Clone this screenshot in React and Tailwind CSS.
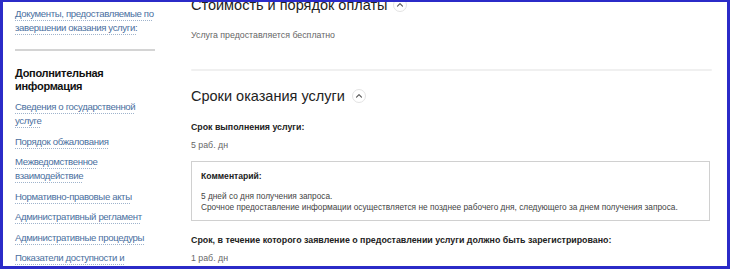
import React from "react";

function Chevron() {
  return (
    <span className="inline-flex items-center justify-center w-[14px] h-[14px] rounded-full border border-[#e3e3e3] bg-white">
      <svg width="8" height="8" viewBox="0 0 8 8" fill="none">
        <path d="M1.5 5.2 L4 2.7 L6.5 5.2" stroke="#555" strokeWidth="1.1" strokeLinecap="round" strokeLinejoin="round" />
      </svg>
    </span>
  );
}

function SideLink({ children }) {
  return (
    <a className="block whitespace-nowrap text-[9.6px] tracking-[-0.35px] leading-[14px] text-[#4a6fa0] underline decoration-dotted decoration-[#9fb3cc] underline-offset-[3px]">
      {children}
    </a>
  );
}

export default function App() {
  return (
    <div
      className="w-[730px] h-[269px] overflow-hidden bg-white border-l-[3px] border-r-[3px] border-t-[2px] border-b-[3px] border-[#2b2bc8] flex"
      style={{ fontFamily: '"Liberation Sans", Arial, sans-serif' }}
    >
      <aside className="w-[152px] shrink-0 pl-[12px] pt-[5px] flex flex-col">
        <SideLink>
          Документы, предоставляемые по
          <br />
          завершении оказания услуги:
        </SideLink>
        <div className="mt-[14px] h-[2px] w-[140px] bg-[#d4d4d4]" />
        <div className="mt-[16px] text-[11px] tracking-[-0.3px] leading-[13px] font-bold text-[#111]">
          Дополнительная
          <br />
          информация
        </div>
        <div className="mt-[7px] flex flex-col gap-[6.5px]">
          <SideLink>
            Сведения о государственной
            <br />
            услуге
          </SideLink>
          <SideLink>Порядок обжалования</SideLink>
          <SideLink>
            Межведомственное
            <br />
            взаимодействие
          </SideLink>
          <SideLink>Нормативно-правовые акты</SideLink>
          <SideLink>Административный регламент</SideLink>
          <SideLink>Административные процедуры</SideLink>
          <SideLink>Показатели доступности и</SideLink>
        </div>
      </aside>
      <main className="ml-[36px] w-[519px] flex flex-col">
        <div className="mt-[-7px] flex items-center gap-[5px] h-[20px]">
          <span className="text-[14.5px] leading-[20px] text-[#222]">Стоимость и порядок оплаты</span>
          <Chevron />
        </div>
        <div className="mt-[14px] text-[8.8px] leading-[12px] text-[#666]">Услуга предоставляется бесплатно</div>
        <div className="mt-[28px] h-[2px] w-[521px] bg-[#f0f0f0] rounded-full" />
        <div className="mt-[15px] flex items-center gap-[7px] h-[20px]">
          <span className="text-[14.5px] leading-[20px] text-[#222]">Сроки оказания услуги</span>
          <Chevron />
        </div>
        <div className="mt-[15px] text-[8.8px] leading-[12px] font-bold text-[#222]">Срок выполнения услуги:</div>
        <div className="mt-[6px] text-[8.8px] leading-[12px] text-[#666]">5 раб. дн</div>
        <div className="mt-[10px] h-[60px] border border-[#d0d0d0] pl-[9px] pt-[8px]">
          <div className="text-[8.6px] leading-[12px] font-bold text-[#222]">Комментарий:</div>
          <div className="mt-[8.5px] text-[8.3px] leading-[11px] text-[#444]">
            5 дней со дня получения запроса.
            <br />
            Срочное предоставление информации осуществляется не позднее рабочего дня, следующего за днем получения запроса.
          </div>
        </div>
        <div className="mt-[13px] text-[8.85px] leading-[12px] font-bold text-[#222]">
          Срок, в течение которого заявление о предоставлении услуги должно быть зарегистрировано:
        </div>
        <div className="mt-[6px] text-[8.8px] leading-[12px] text-[#666]">1 раб. дн</div>
      </main>
    </div>
  );
}
